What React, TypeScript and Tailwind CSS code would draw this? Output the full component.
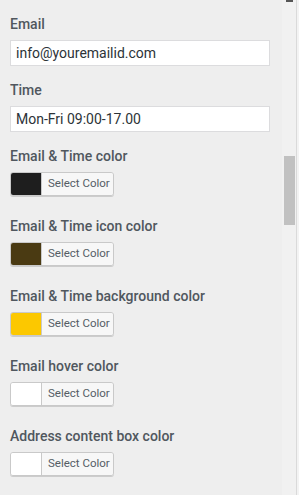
import React from "react";

const colorFields = [
  { label: "Email & Time color", color: "#1e1e1e" },
  { label: "Email & Time icon color", color: "#4a3a12" },
  { label: "Email & Time background color", color: "#fcc800" },
  { label: "Email hover color", color: "#ffffff" },
  { label: "Address content box color", color: "#ffffff" },
];

function TextField({ label, value }: { label: string; value: string }) {
  return (
    <div className="flex flex-col">
      <label className="h-5 text-[14px] leading-5 font-medium text-[#50575e]">{label}</label>
      <input
        readOnly
        value={value}
        className="mt-[6px] h-[26px] w-[260px] border border-[#dcdcde] bg-white px-[5px] text-[14px] text-[#2c3338] outline-none"
      />
    </div>
  );
}

function ColorField({ label, color }: { label: string; color: string }) {
  return (
    <div className="flex flex-col">
      <div className="h-5 text-[14px] leading-5 font-medium text-[#50575e]">{label}</div>
      <button className="mt-[6px] flex h-6 w-[104px] overflow-hidden rounded-[3px] border border-[#c9c9c9] shadow-[0_1px_0_#cccccc]">
        <span className="h-full w-[31px] border-r border-[#c9c9c9]" style={{ backgroundColor: color }} />
        <span className="flex h-full flex-1 items-center bg-[#f7f7f7] pl-[6px] text-[11.5px] text-[#555d66]">
          Select Color
        </span>
      </button>
    </div>
  );
}

export default function App() {
  return (
    <div className="flex h-[495px] w-[299px] overflow-hidden bg-[#eeeeee] font-['Roboto',sans-serif]">
      <div className="flex w-[282px] flex-col pl-[10px] pt-[14px]">
        <TextField label="Email" value="info@youremailid.com" />
        <div className="mt-[14px]">
          <TextField label="Time" value="Mon-Fri 09:00-17.00" />
        </div>
        <div className="mt-[14px] flex flex-col gap-5">
          {colorFields.map((f) => (
            <ColorField key={f.label} label={f.label} color={f.color} />
          ))}
        </div>
      </div>
      <div className="relative w-[14px] bg-[#f1f1f1]">
        <div className="absolute left-[4px] top-0 h-[2px] w-[7px] bg-[#555555]" />
        <div className="absolute left-[2px] top-[156px] h-[69px] w-[11px] bg-[#c1c1c1]" />
      </div>
      <div className="w-[1px] bg-[#dadada]" />
      <div className="flex-1 bg-[#f3f3f3]" />
    </div>
  );
}
